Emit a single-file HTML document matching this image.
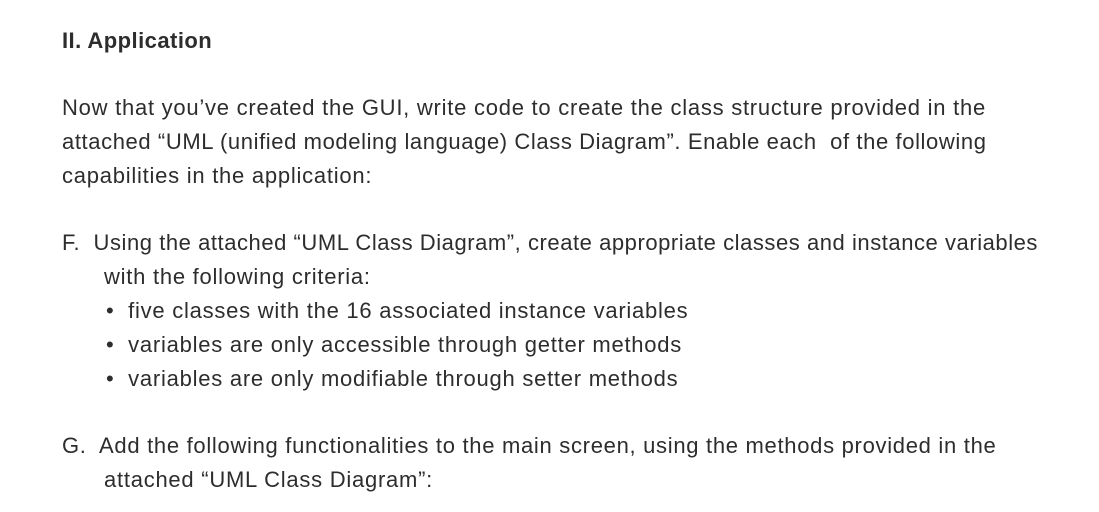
<!DOCTYPE html>
<html><head><meta charset="utf-8"><style>
body{margin:0;width:1099px;height:512px;background:#fff;font-family:"Liberation Sans",sans-serif;color:#2d2d2d;position:relative;overflow:hidden}
.l{position:absolute;white-space:nowrap;font-size:22px;line-height:34px;letter-spacing:0.75px}
.b{font-weight:bold;letter-spacing:0.45px}
</style></head><body>
<div class="l b" style="left:62px;top:24px">II. Application</div>
<div class="l" style="left:62px;top:91px">Now that you’ve created the GUI, write code to create the class structure provided in the</div>
<div class="l" style="left:62px;top:125px;letter-spacing:0.6px">attached “UML (unified modeling language) Class Diagram”. Enable each &nbsp;of the following</div>
<div class="l" style="left:62px;top:159px">capabilities in the application:</div>
<div class="l" style="left:62px;top:226px;letter-spacing:0.55px">F.&nbsp; Using the attached “UML Class Diagram”, create appropriate classes and instance variables</div>
<div class="l" style="left:104px;top:260px">with the following criteria:</div>
<div class="l" style="left:106px;top:294px">•&nbsp; five classes with the 16 associated instance variables</div>
<div class="l" style="left:106px;top:328px">•&nbsp; variables are only accessible through getter methods</div>
<div class="l" style="left:106px;top:362px">•&nbsp; variables are only modifiable through setter methods</div>
<div class="l" style="left:62px;top:429px;letter-spacing:0.7px">G.&nbsp; Add the following functionalities to the main screen, using the methods provided in the</div>
<div class="l" style="left:104px;top:463px">attached “UML Class Diagram”:</div>
</body></html>
